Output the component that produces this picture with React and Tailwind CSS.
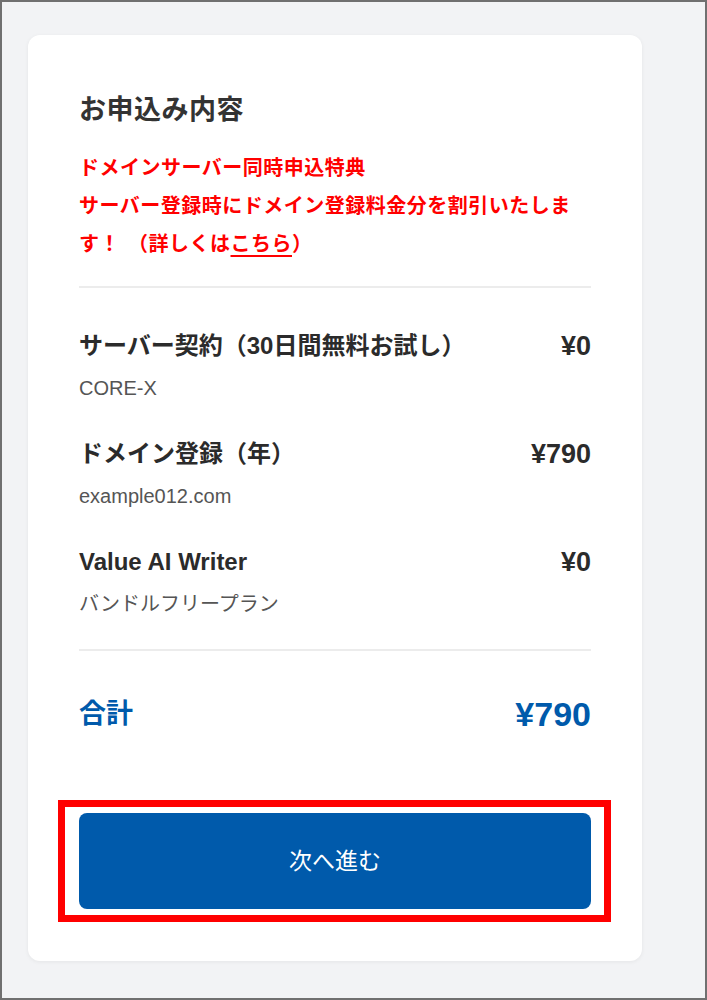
import React from "react";

const items = [
  { name: "サーバー契約（30日間無料お試し）", sub: "CORE-X", price: "¥0" },
  { name: "ドメイン登録（年）", sub: "example012.com", price: "¥790" },
  { name: "Value AI Writer", sub: "バンドルフリープラン", price: "¥0" },
];

const font = {
  fontFamily: '"Liberation Sans", "Noto Sans CJK JP", sans-serif',
};

const App = () => {
  return (
    <div
      className="h-[1000px] w-[707px] box-border border-2 border-[#707070] bg-[#f2f3f5] pt-[33px] pl-[26px]"
      style={font}
    >
      <div className="relative w-[614px] h-[926px] box-border rounded-[12px] bg-white shadow-[0_1px_4px_rgba(0,0,0,0.06)] px-[51px] pt-[55px]">
        <h2 className="text-[27px] leading-[40px] font-bold tracking-[0.5px] text-[#333]">
          お申込み内容
        </h2>

        <p className="mt-[19px] text-[20px] leading-[38px] font-bold tracking-[0.5px] text-[#ff0000]">
          ドメインサーバー同時申込特典
          <br />
          サーバー登録時にドメイン登録料金分を割引いたします！
          <span className="ml-[8px]">（詳しくは</span>
          <span className="underline underline-offset-[4px] decoration-[1.5px]">
            こちら
          </span>
          ）
        </p>

        <div className="mt-[23px] h-[2px] bg-[#ececec]" />

        {/* Line items */}
        <div className="mt-[42px] flex flex-col gap-[36px]">
          {items.map((item) => (
            <div key={item.name}>
              <div className="flex items-center justify-between h-[32px]">
                <span className="text-[24px] font-bold text-[#2b2b2b]">
                  {item.name}
                </span>
                <span className="text-[27px] font-bold text-[#2b2b2b]">
                  {item.price}
                </span>
              </div>
              <div className="mt-[12px] text-[20px] leading-[28px] text-[#555]">
                {item.sub}
              </div>
            </div>
          ))}
        </div>

        <div className="mt-[31px] h-[2px] bg-[#ececec]" />

        <div className="mt-[43px] flex items-center justify-between h-[40px] text-[#005aab] font-bold">
          <span className="text-[27px]">合計</span>
          <span className="text-[34px]">¥790</span>
        </div>

        <button className="mt-[79px] w-full h-[96px] rounded-[8px] bg-[#005aab] text-white text-[23px] flex items-center justify-center">
          次へ進む
        </button>

        {/* annotation frame around the button */}
        <div className="absolute left-[30px] top-[765px] w-[553px] h-[122px] box-border border-[7px] border-[#ff0000] pointer-events-none" />
      </div>
    </div>
  );
};

export default App;
